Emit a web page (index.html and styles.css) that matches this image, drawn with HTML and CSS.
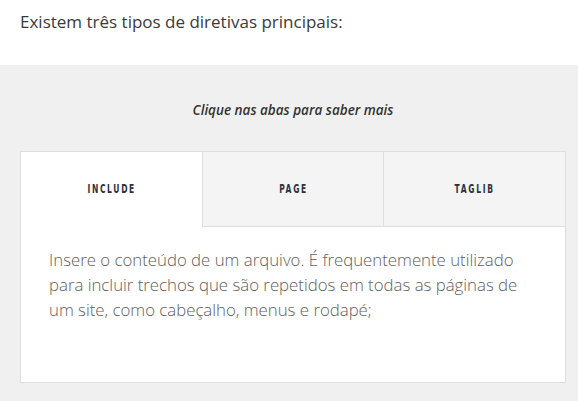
FILE: index.html
```html
<!DOCTYPE html>
<html lang="pt">
<head>
<meta charset="utf-8">
<link rel="stylesheet" href="styles.css">
</head>
<body>
<div class="intro">
  <p>Existem três tipos de diretivas principais:</p>
</div>
<div class="panel">
  <p class="hint">Clique nas abas para saber mais</p>
  <div class="tabs">
    <div class="tab-row">
      <div class="tab active"><span class="tab-label">INCLUDE</span></div>
      <div class="tab"><span class="tab-label">PAGE</span></div>
      <div class="tab"><span class="tab-label">TAGLIB</span></div>
    </div>
    <div class="tab-body">
      <p>Insere o conteúdo de um arquivo. É frequentemente utilizado para incluir trechos que são repetidos em todas as páginas de um site, como cabeçalho, menus e rodapé;</p>
    </div>
  </div>
</div>
</body>
</html>
```
FILE: styles.css
```css
html, body {
  margin: 0;
  padding: 0;
  background: #f0f0f0;
  font-family: "Open Sans", "Liberation Sans", sans-serif;
}
.intro {
  background: #fff;
  height: 65px;
  padding: 0 20px;
  box-sizing: border-box;
}
.intro p {
  margin: 0;
  padding-top: 9px;
  font-size: 17px;
  line-height: 26px;
  color: #3a3a3a;
}
.panel {
  padding: 0 12px 19px 20px;
}
.hint {
  margin: 0;
  padding-top: 35px;
  height: 51px;
  text-align: center;
  font-style: italic;
  font-weight: 600;
  font-size: 13.5px;
  line-height: 20px;
  color: #333;
}
.tabs {
  background: #fff;
  border: 1px solid #dedede;
}
.tab-row {
  display: flex;
}
.tab {
  flex: 1;
  height: 74px;
  display: flex;
  align-items: center;
  justify-content: center;
  background: #f4f4f4;
  border-left: 1px solid #dedede;
  border-bottom: 1px solid #dedede;
}
.tab-label {
  display: inline-block;
  transform: scaleX(0.7);
  font-family: "DejaVu Sans Condensed", "DejaVu Sans", sans-serif;
  font-stretch: condensed;
  font-weight: bold;
  font-size: 12px;
  letter-spacing: 2.4px;
  color: #2b3140;
}
.tab.active {
  background: #fff;
  border-left: none;
  border-bottom-color: transparent;
}
.tab-body {
  padding: 20px 28px 0 28px;
  height: 155px;
  box-sizing: border-box;
}
.tab-body p {
  margin: 0;
  max-width: 482px;
  font-weight: 300;
  font-size: 16.8px;
  line-height: 25px;
  color: #606060;
}
```
